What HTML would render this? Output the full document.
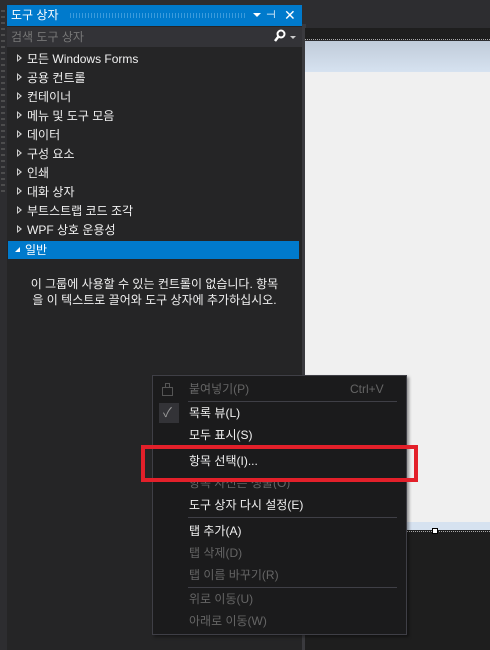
<!DOCTYPE html>
<html><head><meta charset="utf-8"><style>
*{margin:0;padding:0;box-sizing:border-box}
body{width:490px;height:650px;background:#2d2d30;position:relative;overflow:hidden;font-family:"Liberation Sans","Noto Sans CJK KR",sans-serif;font-size:12px;color:#f1f1f1}
.abs{position:absolute}
.item{position:absolute;left:7px;width:292px;height:19px;line-height:19px;padding-left:10px}
.item .tri{display:inline-block;width:0;height:0;border-top:4px solid transparent;border-bottom:4px solid transparent;border-left:5px solid #d0d0d0;margin-right:5px;position:relative;top:-1px}
.item .tri:after{content:"";position:absolute;left:-4px;top:-2px;border-top:2px solid transparent;border-bottom:2px solid transparent;border-left:2.5px solid #252526}
.mi{position:absolute;left:189px;height:22px;line-height:22px;font-size:12px;color:#f1f1f1;white-space:nowrap}
.dis{color:#656565}
.sep{position:absolute;left:188px;width:209px;height:1px;background:#3f3f46}
</style></head><body>
<div class="abs" style="left:1px;top:10px;width:4px;height:185px;background:repeating-linear-gradient(#6a6a6a 0 2px,#2d2d30 2px 6px);opacity:.5"></div>
<div class="abs" style="left:7px;top:5px;width:295px;height:645px;background:#252526"></div>
<div class="abs" style="left:7px;top:5px;width:295px;height:21px;background:#007acc"></div>
<div class="abs" style="left:11px;top:5px;line-height:21px;font-size:12px;color:#fff">도구 상자</div>
<div class="abs" style="left:70px;top:13px;width:176px;height:5px;background:repeating-linear-gradient(90deg,#4aa3e0 0 1px,transparent 1px 3px);opacity:.8"></div>
<div class="abs" style="left:253px;top:13px;border-left:4px solid transparent;border-right:4px solid transparent;border-top:4px solid #fff"></div>
<div class="abs" style="left:266px;top:9px;font-size:11px;color:#fff;line-height:12px">⊣</div>
<div class="abs" style="left:284px;top:7px;font-size:14px;color:#fff;line-height:16px">✕</div>
<div class="abs" style="left:7px;top:27px;width:295px;height:20px;background:#333337"></div>
<div class="abs" style="left:11px;top:27px;line-height:20px;color:#777">검색 도구 상자</div>
<svg class="abs" style="left:274px;top:29px" width="12" height="14"><circle cx="7" cy="5" r="3.5" stroke="#fff" stroke-width="2" fill="none"/><line x1="4.5" y1="7.5" x2="1" y2="12" stroke="#fff" stroke-width="2.5"/></svg>
<div class="abs" style="left:290px;top:36px;border-left:3px solid transparent;border-right:3px solid transparent;border-top:3px solid #ccc"></div>
<div class="item" style="top:50px"><span class="tri"></span>모든 Windows Forms</div>
<div class="item" style="top:69px"><span class="tri"></span>공용 컨트롤</div>
<div class="item" style="top:88px"><span class="tri"></span>컨테이너</div>
<div class="item" style="top:107px"><span class="tri"></span>메뉴 및 도구 모음</div>
<div class="item" style="top:126px"><span class="tri"></span>데이터</div>
<div class="item" style="top:145px"><span class="tri"></span>구성 요소</div>
<div class="item" style="top:164px"><span class="tri"></span>인쇄</div>
<div class="item" style="top:183px"><span class="tri"></span>대화 상자</div>
<div class="item" style="top:202px"><span class="tri"></span>부트스트랩 코드 조각</div>
<div class="item" style="top:221px"><span class="tri"></span>WPF 상호 운용성</div>
<div class="abs" style="left:8px;top:241px;width:291px;height:18px;background:#007acc"></div>
<div class="abs" style="left:15px;top:247px;border-left:5px solid transparent;border-bottom:5px solid #fff"></div>
<div class="abs" style="left:25px;top:241px;line-height:18px;color:#fff">일반</div>
<div class="abs" style="left:7px;top:276px;width:295px;text-align:center;line-height:16px;color:#f1f1f1">이 그룹에 사용할 수 있는 컨트롤이 없습니다. 항목<br>을 이 텍스트로 끌어와 도구 상자에 추가하십시오.</div>
<div class="abs" style="left:302px;top:24px;width:4px;height:626px;background:#3a3a3e"></div>
<div class="abs" style="left:305px;top:28px;width:185px;height:12px;background:#1e1e1e"></div>
<div class="abs" style="left:305px;top:39px;width:185px;height:1px;background:repeating-linear-gradient(90deg,#aaa 0 1px,transparent 1px 2px)"></div>
<div class="abs" style="left:305px;top:41px;width:185px;height:31px;background:linear-gradient(#c0cbd9,#d6e2f0)"></div>
<div class="abs" style="left:305px;top:72px;width:185px;height:450px;background:#f0f0f0"></div>
<div class="abs" style="left:305px;top:522px;width:185px;height:8px;background:#d6e2f0"></div>
<div class="abs" style="left:305px;top:530px;width:185px;height:120px;background:#1e1e1e"></div>
<div class="abs" style="left:305px;top:531px;width:185px;height:1px;background:repeating-linear-gradient(90deg,#aaa 0 1px,transparent 1px 2px)"></div>
<div class="abs" style="left:432px;top:528px;width:6px;height:6px;background:#fff;border:1px solid #000"></div>
<div class="abs" style="left:152px;top:375px;width:255px;height:260px;background:#1b1b1c;border:1px solid #3f3f46;box-shadow:2px 2px 3px rgba(0,0,0,.4)"></div>
<svg class="abs" style="left:161px;top:382px" width="13" height="15"><rect x="1.5" y="5.5" width="10" height="8" fill="none" stroke="#555"/><rect x="4.5" y="1.5" width="4" height="4" fill="none" stroke="#555"/></svg>
<div class="mi dis" style="top:378px">붙여넣기(P)</div>
<div class="mi dis" style="top:378px;left:350px">Ctrl+V</div>
<div class="sep" style="top:401px"></div>
<div class="abs" style="left:159px;top:403px;width:20px;height:20px;background:#333337"></div>
<div class="abs" style="left:163px;top:404px;color:#999;font-size:13px;line-height:18px">✓</div>
<div class="mi" style="top:402px">목록 뷰(L)</div>
<div class="mi" style="top:424px">모두 표시(S)</div>
<div class="mi" style="top:450px">항목 선택(I)...</div>
<div class="abs" style="left:189px;top:482px;width:200px;height:7px;overflow:hidden"><div class="mi dis" style="left:0;top:-10px">항목 자신은 생물(O)</div></div>
<div class="mi" style="top:494px">도구 상자 다시 설정(E)</div>
<div class="sep" style="top:517px"></div>
<div class="mi" style="top:520px">탭 추가(A)</div>
<div class="mi dis" style="top:542px">탭 삭제(D)</div>
<div class="mi dis" style="top:564px">탭 이름 바꾸기(R)</div>
<div class="sep" style="top:587px"></div>
<div class="mi dis" style="top:588px">위로 이동(U)</div>
<div class="mi dis" style="top:610px">아래로 이동(W)</div>
<div class="abs" style="left:141px;top:445px;width:277px;height:37px;border:4px solid #e3202a"></div>
</body></html>
